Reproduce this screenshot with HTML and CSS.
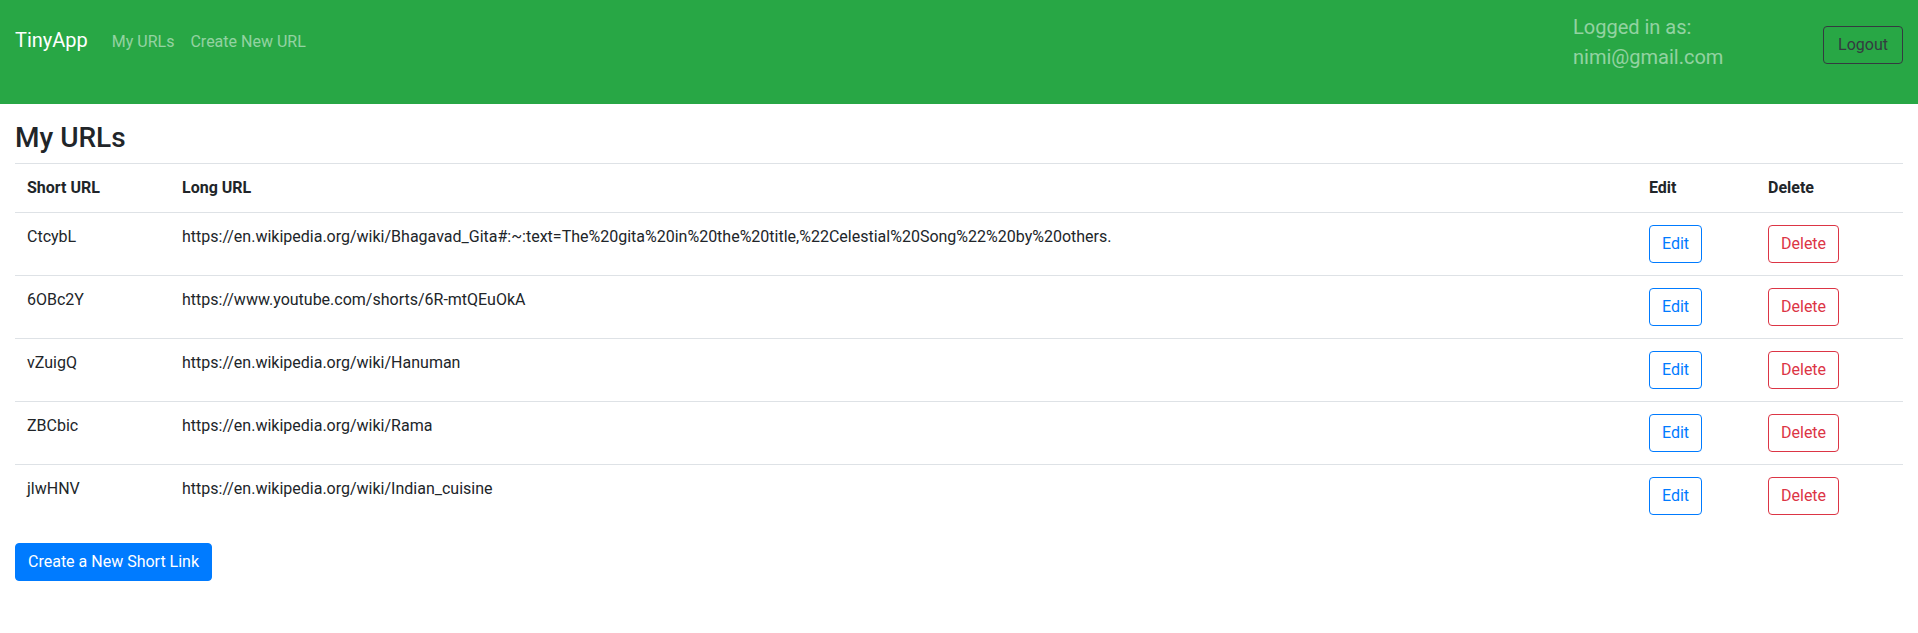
FILE: index.html
```html
<!DOCTYPE html>
<html lang="en">
<head>
<meta charset="utf-8">
<title>TinyApp</title>
<link rel="stylesheet" href="styles.css">
</head>
<body>
<nav class="navbar">
  <div class="nav-left">
    <a class="brand" href="#">TinyApp</a>
    <a class="nav-link" href="#">My URLs</a>
    <a class="nav-link" href="#">Create New URL</a>
  </div>
  <div class="nav-right">
    <div class="user-info">Logged in as:<br>nimi@gmail.com</div>
    <button class="btn btn-outline-dark" type="button">Logout</button>
  </div>
</nav>
<main class="container">
  <h3 class="title">My URLs</h3>
  <table class="table">
    <colgroup>
      <col class="c-short"><col class="c-long"><col class="c-edit"><col class="c-del">
    </colgroup>
    <thead>
      <tr><th>Short URL</th><th>Long URL</th><th>Edit</th><th>Delete</th></tr>
    </thead>
    <tbody>
      <tr><td>CtcybL</td><td>https://en.wikipedia.org/wiki/Bhagavad_Gita#:~:text=The%20gita%20in%20the%20title,%22Celestial%20Song%22%20by%20others.</td><td><button class="btn btn-outline-primary">Edit</button></td><td><button class="btn btn-outline-danger">Delete</button></td></tr>
      <tr><td>6OBc2Y</td><td>https://www.youtube.com/shorts/6R-mtQEuOkA</td><td><button class="btn btn-outline-primary">Edit</button></td><td><button class="btn btn-outline-danger">Delete</button></td></tr>
      <tr><td>vZuigQ</td><td>https://en.wikipedia.org/wiki/Hanuman</td><td><button class="btn btn-outline-primary">Edit</button></td><td><button class="btn btn-outline-danger">Delete</button></td></tr>
      <tr><td>ZBCbic</td><td>https://en.wikipedia.org/wiki/Rama</td><td><button class="btn btn-outline-primary">Edit</button></td><td><button class="btn btn-outline-danger">Delete</button></td></tr>
      <tr><td>jlwHNV</td><td>https://en.wikipedia.org/wiki/Indian_cuisine</td><td><button class="btn btn-outline-primary">Edit</button></td><td><button class="btn btn-outline-danger">Delete</button></td></tr>
    </tbody>
  </table>
  <button class="btn btn-primary" type="button">Create a New Short Link</button>
</main>
</body>
</html>
```
FILE: styles.css
```css
* { box-sizing: border-box; }

body {
  margin: 0;
  font-family: "Segoe UI", Roboto, "Liberation Sans", sans-serif;
  font-size: 16px;
  line-height: 1.5;
  color: #212529;
  background: #fff;
}

a { text-decoration: none; }

.navbar {
  display: flex;
  justify-content: space-between;
  align-items: flex-start;
  height: 104px;
  padding: 12px 15px 0 15px;
  background: #28a745;
}

.nav-left {
  display: flex;
  align-items: baseline;
  margin-top: 13px;
}

.brand {
  font-size: 20px;
  line-height: 30px;
  color: #fff;
  margin-right: 16px;
}

.nav-link {
  padding: 0 8px;
  color: rgba(255, 255, 255, 0.5);
}

.nav-right {
  display: flex;
  align-items: flex-start;
}

.user-info {
  width: 250px;
  font-size: 20px;
  line-height: 30px;
  color: rgba(255, 255, 255, 0.5);
}

.btn {
  display: inline-block;
  font-family: inherit;
  font-size: 16px;
  line-height: 24px;
  padding: 6px 12px;
  border: 1px solid transparent;
  border-radius: 4px;
  background: transparent;
  cursor: pointer;
}

.nav-right .btn {
  margin-top: 14px;
  min-width: 80px;
}

.btn-outline-dark { color: #343a40; border-color: #343a40; }
.btn-outline-primary { color: #007bff; border-color: #007bff; }
.btn-outline-danger { color: #dc3545; border-color: #dc3545; }
.btn-primary { color: #fff; background: #007bff; border-color: #007bff; }

.container {
  padding: 0 15px;
}

.title {
  font-size: 28px;
  font-weight: 500;
  line-height: 1.2;
  margin: 17px 0 8px;
}

.table {
  width: 100%;
  table-layout: fixed;
  border-collapse: collapse;
  margin-bottom: 16px;
}

.c-short { width: 155px; }
.c-edit { width: 119px; }
.c-del { width: 147px; }

.table th,
.table td {
  padding: 12px;
  text-align: left;
  vertical-align: top;
  border-top: 1px solid #dee2e6;
}

.table th { font-weight: 700; }
```
